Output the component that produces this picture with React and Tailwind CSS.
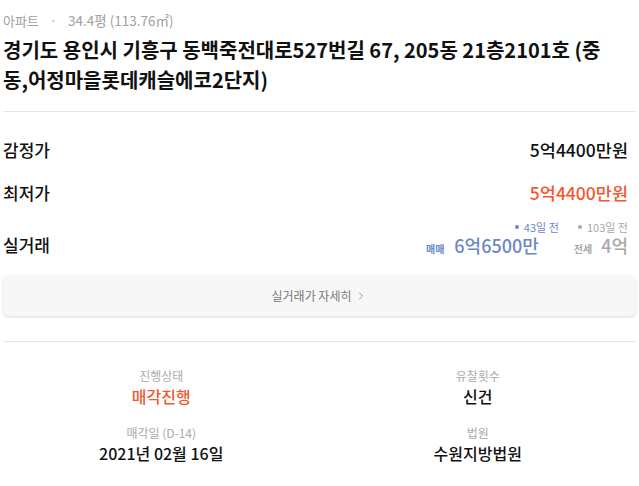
import { ChevronRight } from 'lucide-react'

const font = { fontFamily: '"Noto Sans CJK KR", "Noto Sans", sans-serif' }

function PriceRow({ label, value, valueClass }) {
  return (
    <div className="flex items-center justify-between pr-2 text-[17px] font-medium leading-6">
      <span className="text-[#111]">{label}</span>
      <span className={`text-[17.5px] ${valueClass}`}>{value}</span>
    </div>
  )
}

function Trade({ ago, kind, price, color, priceClass }) {
  return (
    <div className="flex flex-col items-end">
      <div className={`flex items-center gap-[5px] text-[11px] leading-[14px] ${color}`}>
        <span className="inline-block h-[4px] w-[4px] rounded-full bg-current" />
        <span>{ago}</span>
      </div>
      <div className={`flex items-baseline ${priceClass} ${color}`}>
        <span className="text-[10px] font-bold">{kind}</span>
        <span className="text-[18px] font-medium leading-[22px]">{price}</span>
      </div>
    </div>
  )
}

function Info({ label, value, valueClass }) {
  return (
    <div className="flex flex-col items-center">
      <span className="text-[12px] leading-[18px] text-[#aaa]">{label}</span>
      <span className={`text-[16px] font-medium leading-[22px] ${valueClass}`}>{value}</span>
    </div>
  )
}

export default function App() {
  return (
    <div className="min-h-screen bg-white px-[3px]" style={font}>
      <div className="mt-[10px] h-5 text-[13px] leading-5 text-[#a0a0a0]">
        아파트 <span className="mx-[8px]">·</span> <span className="text-[13.5px]">34.4평 (113.76㎡)</span>
      </div>
      <h1 className="mt-[5px] pr-6 text-[20px] font-bold leading-[30px] text-[#111]">
        경기도 용인시 기흥구 동백죽전대로527번길 67, 205동 21층2101호 (중동,어정마을롯데캐슬에코2단지)
      </h1>
      <div className="mt-4 border-t border-[#e5e5e5]" />

      <div className="mt-[26px] flex flex-col gap-[19px]">
        <PriceRow label="감정가" value="5억4400만원" valueClass="text-[#111]" />
        <PriceRow label="최저가" value="5억4400만원" valueClass="text-[#f4572e]" />
      </div>

      <div className="mt-[15px] flex items-end justify-between pr-2">
        <span className="text-[17px] font-medium leading-[22px] text-[#111]">실거래</span>
        <div className="flex items-end gap-[15px]">
          <Trade ago="43일 전" kind="매매" price="6억6500만" color="text-[#6b87c6]" priceClass="mr-5 gap-[10px]" />
          <Trade ago="103일 전" kind="전세" price="4억" color="text-[#a8a8a8]" priceClass="gap-[9px]" />
        </div>
      </div>

      <button className="mt-5 flex h-10 w-full items-center justify-center gap-1 rounded-md bg-[#f7f7f7] text-[12px] text-[#777] shadow-[0_1px_3px_rgba(0,0,0,0.15)]">
        실거래가 자세히
        <ChevronRight size={12} strokeWidth={1.5} />
      </button>

      <div className="mt-[25px] border-t border-[#e5e5e5]" />

      <div className="mt-[25px] grid grid-cols-2 gap-y-[17px]">
        <Info label="진행상태" value="매각진행" valueClass="text-[#f4572e]" />
        <Info label="유찰횟수" value="신건" valueClass="text-[#111]" />
        <Info label="매각일 (D-14)" value="2021년 02월 16일" valueClass="text-[#111]" />
        <Info label="법원" value="수원지방법원" valueClass="text-[#111]" />
      </div>
    </div>
  )
}
